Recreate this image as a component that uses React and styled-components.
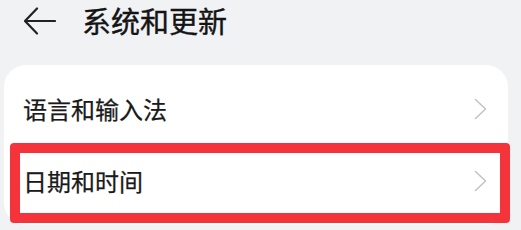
import React from 'react';
import styled, { createGlobalStyle } from 'styled-components';

const GlobalStyle = createGlobalStyle`
  html, body {
    margin: 0;
    padding: 0;
    background: #f1f2f4;
    font-family: "Noto Sans CJK SC", "Noto Sans", sans-serif;
    color: #191919;
  }
`;

const Page = styled.div`
  width: 521px;
  height: 230px;
  overflow: hidden;
  box-sizing: border-box;
`;

const Header = styled.div`
  display: flex;
  align-items: center;
  height: 41px;
  padding-left: 24px;
`;

const Title = styled.div`
  margin-left: 26px;
  font-size: 29px;
  font-weight: 400;
  line-height: 1;
  color: #141414;
  -webkit-text-stroke: 0.4px #141414;
`;

const Card = styled.div`
  margin: 24px 0 0 4px;
  width: 504px;
  box-sizing: border-box;
  padding: 8px 0;
  background: #ffffff;
  border-radius: 22px;
`;

const Row = styled.div`
  position: relative;
  display: flex;
  align-items: center;
  justify-content: space-between;
  height: 72px;
  padding: 0 21px 0 19px;
`;

const Label = styled.span`
  font-size: 24px;
  line-height: 1;
  color: #1a1a1a;
  -webkit-text-stroke: 0.25px #1a1a1a;
`;

const Highlight = styled.div`
  position: absolute;
  top: -2px;
  bottom: -6px;
  left: 6px;
  right: -2px;
  border: 10.5px solid #f5333b;
  border-radius: 4px;
  pointer-events: none;
`;

const BackArrow = () => (
  <svg width="32" height="28" viewBox="0 0 32 28">
    <path
      d="M1 14 H31 M13 1.5 L1 14 L13 26.5"
      fill="none"
      stroke="#222"
      strokeWidth="2.2"
      strokeLinecap="round"
      strokeLinejoin="round"
    />
  </svg>
);

const Chevron = () => (
  <svg width="13" height="22" viewBox="0 0 13 22">
    <path
      d="M1.5 1.5 L11.5 11 L1.5 20.5"
      fill="none"
      stroke="#c4c4c4"
      strokeWidth="1.6"
      strokeLinecap="round"
      strokeLinejoin="round"
    />
  </svg>
);

const items = [
  { label: '语言和输入法' },
  { label: '日期和时间', marked: true },
];

export default function App() {
  return (
    <Page>
      <GlobalStyle />
      <Header>
        <BackArrow />
        <Title>系统和更新</Title>
      </Header>
      <Card>
        {items.map((it) => (
          <Row key={it.label}>
            <Label>{it.label}</Label>
            <Chevron />
            {it.marked && <Highlight />}
          </Row>
        ))}
      </Card>
    </Page>
  );
}
